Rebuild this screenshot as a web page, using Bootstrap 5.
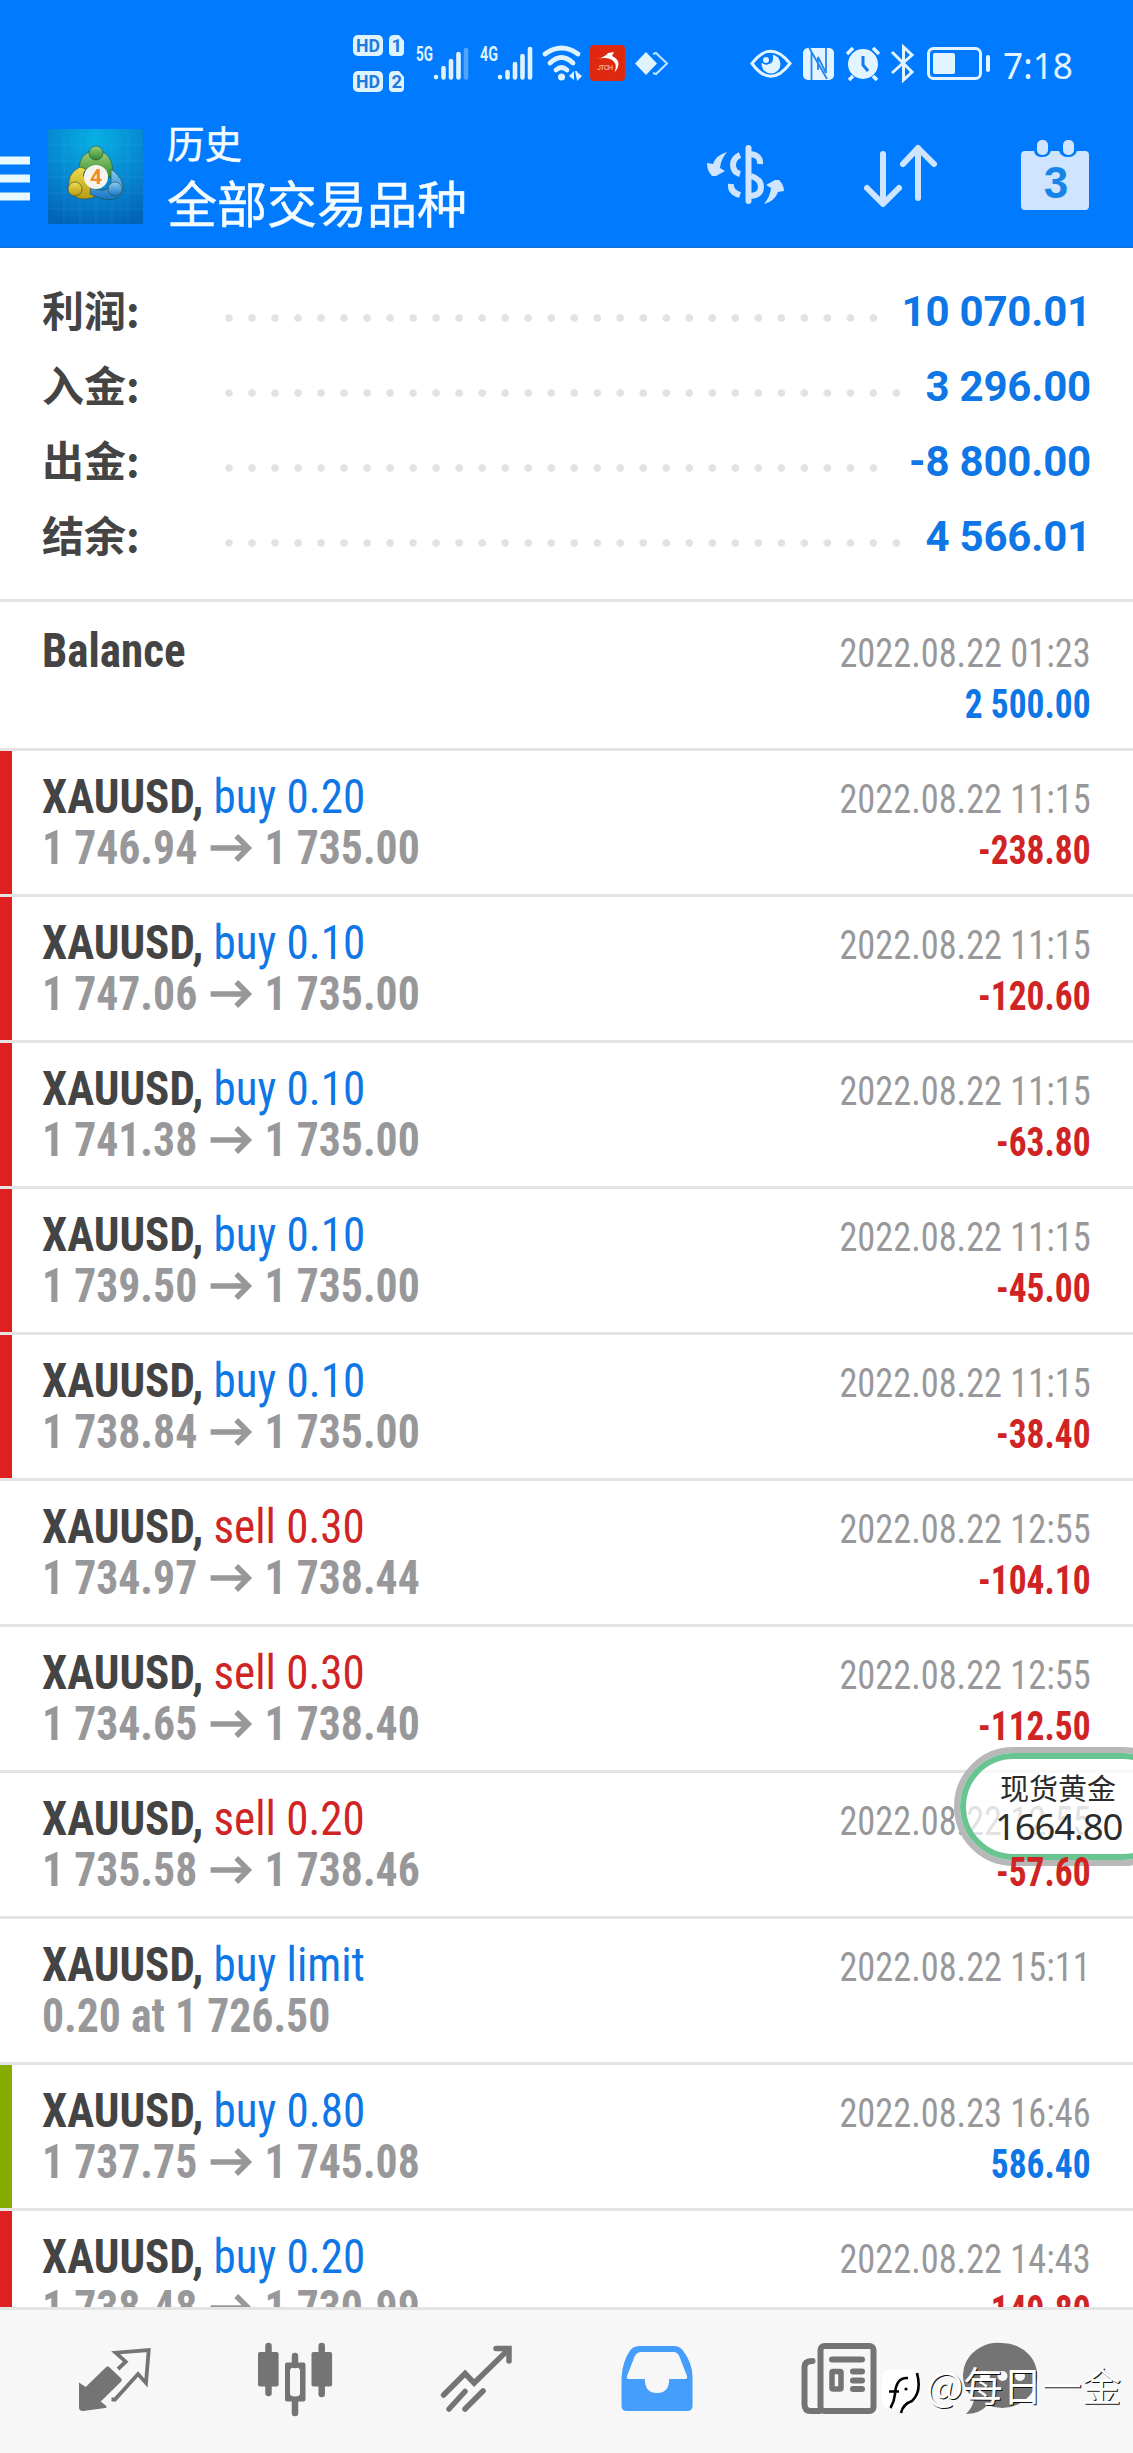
<!DOCTYPE html>
<html lang="zh-CN">
<head>
<meta charset="utf-8">
<meta name="viewport" content="width=device-width, initial-scale=1">
<title>历史</title>
<link href="https://cdn.jsdelivr.net/npm/bootstrap@5.3.0/dist/css/bootstrap.min.css" rel="stylesheet">
<style>
body{font-family:Roboto,"Noto Sans CJK SC",sans-serif;color:#444;background:#fff}
.screen{width:1133px;height:2453px;overflow:hidden}
.topbar{height:248px;background:#007aff;border-bottom:1px solid #1a6fce}
.status{height:120px}
.titles{margin-left:25px;line-height:1;color:#f4fcff;font-family:"Noto Sans CJK SC",sans-serif;-webkit-text-stroke:.5px #f4fcff}
.title-a{font-size:37.5px;line-height:43px;height:44px}
.title-b{font-size:50px;line-height:74px}
.summary{height:354px;padding:26px 42px 0;border-bottom:3px solid #e4e4e4}
.sumrow{height:75px}
.sumlabel{width:183px;font:700 42px/69px "Noto Sans CJK SC",sans-serif;height:75px}
.dots{height:9px;margin-top:14px;background:radial-gradient(circle at 4px 4px,#e2e2e2 3.4px,transparent 4.2px) 0 0/23.02px 9px repeat-x}
.sumval{font-weight:700;font-size:42px;letter-spacing:-.2px;color:#0f76e6;line-height:75px;white-space:pre}
.deals{height:1705px}
.deal{height:146px;border-bottom:3px solid #e4e4e4;padding:20px 42px 0}
.deal-balance{height:149px;padding-top:23px}
.loss{background:linear-gradient(#e02020,#e02020) 0 0/12px 100% no-repeat}
.gain{background:linear-gradient(#86ac00,#86ac00) 0 0/12px 100% no-repeat}
.cond{font-family:"Roboto Condensed",Roboto,sans-serif;font-stretch:75%;white-space:nowrap}
.sym,.px{transform-origin:0 50%}
.when,.amt{transform-origin:100% 50%}
.sym{font-size:48px;line-height:51px;transform:scaleX(.938)}
.px{font-size:48px;line-height:51px;font-weight:700;color:#98989a;transform:scaleX(.91)}
.px svg{margin:0 14px 6px}
.when{font-size:40px;line-height:51px;margin-top:3px;color:#98989a;transform:scaleX(.908)}
.amt{font-size:40px;line-height:51px;font-weight:700;transform:scaleX(.885)}
.up{color:#0f76e6}.down{color:#d02424}
.front{position:relative;z-index:3}
.tabs{height:146px;background:#f7f7f7;border-top:3px solid #e4e4e4}
.pill{left:954px;top:1747px;width:228px;height:119px;border:6px solid #b8b8b8;border-radius:60px;z-index:2}
.pill-in{border:6px solid #68c592;border-radius:54px;background:rgba(255,255,255,.72);height:107px;padding:13px 0 0 34px;color:#2c2c2c;font-family:"Noto Sans","Noto Sans CJK SC",sans-serif}
.pill-name{font-size:29px;line-height:34px}
.pill-price{font-size:36.5px;line-height:40px;letter-spacing:-1.1px;margin-left:-5px}
.wm{left:880px;top:2358px;z-index:4}
.wm span{margin-left:4px;font:400 39.5px/52px "Noto Sans CJK SC",sans-serif;color:#fff;text-shadow:1px 1px 0 #111}
</style>
</head>
<body>
<div class="screen position-relative">
<header class="topbar">
  <div class="status d-flex">
    <svg width="700" height="120" viewBox="0 0 700 120" fill="#dff3ff" font-family="Roboto" font-weight="700">
      <rect x="353" y="35" width="30" height="21" rx="5"/><path d="M389 40q0-5 5-5h5l5 6v11q0 4-4 4h-7q-4 0-4-4z"/>
      <rect x="353" y="71" width="30" height="21" rx="5"/><path d="M389 76q0-5 5-5h5l5 6v11q0 4-4 4h-7q-4 0-4-4z"/>
      <g fill="#1c7be0" font-size="18.500"><text x="356" y="52" textLength="24" lengthAdjust="spacingAndGlyphs">HD</text><text x="391.500" y="52">1</text><text x="356" y="88" textLength="24" lengthAdjust="spacingAndGlyphs">HD</text><text x="391.500" y="88">2</text></g>
      <g font-size="20"><text x="416" y="61" textLength="17" lengthAdjust="spacingAndGlyphs">5G</text><text x="480" y="61" textLength="18" lengthAdjust="spacingAndGlyphs">4G</text></g>
      <g stroke="#dff3ff" stroke-width="4.6" stroke-linecap="round"><path d="M436 77v.1M443.500 68v9.500M451 61v16.500M458.500 54v23.500M500 77v.1M507.500 72v5.500M515 64v13.500M522.500 56v21.500M530 49v28.500"/><path d="M466 50v27.500" opacity=".35"/></g>
      <g fill="none" stroke="#dff3ff" stroke-width="4.800" stroke-linecap="round"><path d="M545 54Q561.500 42 578 54M550 63Q561.500 52 573 63M556 70Q561.500 65 567 70"/></g>
      <circle cx="561.500" cy="77" r="3.500"/><path d="M569 76l5-5v9M575 71h2v9M577 72l5 4-5 5"/>
      <rect x="590" y="45" width="35" height="36" rx="4" fill="#de2910"/>
      <path d="M597 59q8-2 11-6l6-1-2 4q12 6 2 17 5-10-4-14-5-2-13 0" fill="#fff"/><text x="597" y="70" font-size="7" font-weight="400" fill="#ffd8c8" textLength="16">JTCH</text>
      <path d="M646 52l11 11.500-11 11.500-11-11.500z"/><path d="M653 54l3-1 11 10.500-11 10.500-3-1" fill="none" stroke="#bfe4ff" stroke-width="2"/>
    </svg>
    <svg width="433" height="120" viewBox="700 0 433 120" fill="#e2f4ff">
      <path d="M752 63.500Q770.500 39 790 63.500Q770.500 89 752 63.500Z" fill="none" stroke="#e2f4ff" stroke-width="3"/><circle cx="771" cy="64" r="9.500"/><path d="M761 62q0-9 8-9l4 2q1 8-4 9-4 2-8-2" fill="#007aff"/><circle cx="766" cy="60" r="3"/>
      <rect x="803" y="48" width="31" height="32" rx="5"/><path d="M811.500 80V52L827 79M826 48v25L818 57V70M811.500 52L809 47" stroke="#2385ee" stroke-width="1.800" fill="none"/>
      <circle cx="863" cy="64" r="15"/><path d="M847 54l6-6M879 54l-6-6M853 76l-4 4M873 76l4 4" stroke="#e2f4ff" stroke-width="3.500"/><path d="M863 56v9l5 6" stroke="#1677e8" stroke-width="3" fill="none"/>
      <path d="M892 52l20 20-8.500 8V47l8.500 8-20 18" fill="none" stroke="#e2f4ff" stroke-width="3"/>
      <rect x="928.500" y="48.500" width="52" height="30" rx="5" fill="none" stroke="#e2f4ff" stroke-width="3"/><rect x="933" y="53" width="22" height="21" rx="2"/><rect x="986" y="55" width="4" height="17" rx="2"/>
      <text x="1003" y="79" font-family="Noto Sans" font-size="37" textLength="70" lengthAdjust="spacingAndGlyphs">7:18</text>
    </svg>
  </div>
  <div class="d-flex align-items-start">
    <svg width="142" height="120" viewBox="0 120 142 120" overflow="visible">
      <defs><radialGradient id="tile" cx=".5" cy=".1" r=".95"><stop offset="0" stop-color="#06b0e4"/><stop offset=".6" stop-color="#0783cf"/><stop offset="1" stop-color="#0263b8"/></radialGradient>
      <linearGradient id="gr" x2="0" y2="1"><stop stop-color="#9dd07a"/><stop offset="1" stop-color="#2d8a2f"/></linearGradient><linearGradient id="ye" x2="0" y2="1"><stop stop-color="#f0dc4e"/><stop offset="1" stop-color="#b59a12"/></linearGradient><linearGradient id="bl" x2="0" y2="1"><stop stop-color="#8accf2"/><stop offset="1" stop-color="#1676c4"/></linearGradient></defs>
      <path fill="#e8faff" d="M0 156.500h30v8H0zM0 174.500h30v8H0zM0 192.500h30v8H0z"/>
      <rect x="48" y="129" width="95" height="95" fill="url(#tile)"/>
      <path d="M64 129v95M80 129v95M96 129v95M112 129v95M128 129v95M48 145h95M48 161h95M48 177h95M48 193h95M48 209h95" stroke="#5ad0f5" stroke-opacity=".13"/>
      <g stroke="#214d42" stroke-opacity=".6"><path d="M79 170Q79 151 96 151T113 175Q104 183 88 174L79 170z" fill="url(#gr)"/><path d="M80 167Q65 174 70 192Q78 203 95 197L88 181Q80 176 86 169z" fill="url(#ye)"/><path d="M111 169Q125 179 123 192Q114 206 90 194L91 187Q103 194 111 186z" fill="url(#bl)"/><circle cx="96" cy="153" r="7" fill="url(#gr)"/><circle cx="75" cy="189" r="7" fill="url(#ye)"/><circle cx="115" cy="189" r="7" fill="url(#bl)"/></g>
      <circle cx="96" cy="177" r="12" fill="#f5f3ee"/><text x="96" y="184" text-anchor="middle" font-family="Roboto" font-weight="700" font-size="21" fill="#f08a28">4</text>
    </svg>
    <div class="titles"><div class="title-a">历史</div><div class="title-b">全部交易品种</div></div>
    <svg class="ms-auto" width="453" height="120" viewBox="680 120 453 120" fill="#cfe5ff">
      <path d="M727 152q-11 3-14 12l-6-1q0 8 5 13h4l9-5-5-3q1-9 7-16z"/><path d="M764 204q11-3 14-12l6-1q0-6-5-11h-4l-9 5 5 3q-1 9-7 16z"/>
      <g fill="none" stroke="#cfe5ff" stroke-width="6"><path d="M748.500 148v53" stroke-linecap="round"/><path d="M740 155q-7 3-7 10t7 9M750 154q11 1 10 10M740 195q-10-3-9-11M751 176q10 3 10 11t-10 9"/></g>
      <g fill="none" stroke="#cfe5ff" stroke-width="6" stroke-linecap="round" stroke-linejoin="round"><path d="M883 154v49M867 188l16 16 16-16M918 198v-50M903 164l15-16 16 16"/></g>
      <path d="M1025 151h9q1 6 8 6t9-6h8q2 6 9 6t9-6h8q4 0 4 4v51q0 4-4 4h-60q-4 0-4-4v-51q0-4 4-4z"/><rect x="1037" y="140" width="11" height="15" rx="5"/><rect x="1063" y="140" width="11" height="15" rx="5"/>
      <text x="1056" y="198" text-anchor="middle" font-family="Liberation Sans" font-weight="700" font-size="44" fill="#1784e8">3</text>
    </svg>
  </div>
</header>
<section class="summary">
  <div class="sumrow d-flex align-items-center"><div class="sumlabel">利润:</div><div class="dots" style="width:653px"></div><div class="sumval ms-auto">10 070.01</div></div>
  <div class="sumrow d-flex align-items-center"><div class="sumlabel">入金:</div><div class="dots" style="width:676px"></div><div class="sumval ms-auto">3 296.00</div></div>
  <div class="sumrow d-flex align-items-center"><div class="sumlabel">出金:</div><div class="dots" style="width:653px"></div><div class="sumval ms-auto">-8 800.00</div></div>
  <div class="sumrow d-flex align-items-center"><div class="sumlabel">结余:</div><div class="dots" style="width:676px"></div><div class="sumval ms-auto">4 566.01</div></div>
</section>
<main class="deals overflow-hidden cond" id="deals">
  <div class="deal deal-balance d-flex justify-content-between"><div class="sym fw-bold">Balance</div><div class="text-end"><div class="when">2022.08.22 01:23</div><div class="amt up">2 500.00</div></div></div>
</main>
<nav class="tabs">
  <svg width="1133" height="143" viewBox="0 2310 1133 143" fill="#747474">
    <path d="M79 2382.500l6.700 4.500 20-19.500q2-2 4 0l11 10.500q2 2 0 4l-20 19.500 5 4q2 2-.5 2.500l-22 3q-4 0-4.200-3z"/>
    <path d="M118 2369l7.700-7.300-10-9 33-2.700-2.700 33-8-9-23 25.500-3.500 0" fill="none" stroke="#747474" stroke-width="3.800"/>
    <rect x="258" y="2352" width="20.600" height="34.500" rx="2"/><rect x="311.500" y="2352" width="20.600" height="34.500" rx="2"/><path d="M268.500 2346v47M321.700 2346v48M295 2356v9M295 2402v11" stroke="#747474" stroke-width="6.500" stroke-linecap="round"/><path fill-rule="evenodd" d="M287 2362.500h16.500q2 0 2 2v35q0 2-2 2H287q-2 0-2-2v-35q0-2 2-2zm3 8v23q0 3 5 3t5-3v-23q0-3-5-3t-5 3z"/>
    <path d="M443.600 2395l21.500-21.500 9 9.500L509 2349M496 2348.500h13v12.500M449 2409l16-17.500M465 2409l18-18" fill="none" stroke="#747474" stroke-width="5.500" stroke-linecap="round"/>
    <path transform="translate(621.500 0) scale(1.11 1) translate(-617 0)" fill="#459dfc" fill-rule="evenodd" d="M634 2346h30q5 0 8 4 9 13 9 27v29q0 5-5 5h-54q-5 0-5-5v-29q1-16 8-27 3-4 9-4zm1 6q-4 0-6 4l-7 20q-1 3 2 3h14q0 14 11 14t11-14h14q3 0 2-3l-7-20q-2-4-5-4z"/>
    <g fill="none" stroke="#747474" stroke-width="6" stroke-linecap="round"><rect x="820.500" y="2346" width="53" height="65" rx="4"/><path d="M812.500 2361q-8 0-8 6v37q0 7 6 7h9M832 2359.500h30M853 2371.500h9M853 2380.500h9M853 2389h9"/><rect x="832" y="2371.500" width="9" height="17.500" rx="1" stroke-width="5.500"/></g>
    <path d="M1001.500 2343a35 32.500 0 1 1-14 62q-8 9-21.500 9 7-7 8-15a35 32.500 0 0 1 27.500-56z"/><g fill="#f7f7f7"><circle cx="985" cy="2376" r="5"/><circle cx="1002.500" cy="2376" r="5"/><circle cx="1020" cy="2376" r="5"/></g>
  </svg>
</nav>
<div class="pill position-absolute"><div class="pill-in"><div class="pill-name">现货黄金</div><div class="pill-price text-nowrap">1664.80</div></div></div>
<div class="wm position-absolute d-flex">
  <svg width="42" height="60" viewBox="880 2358 42 60"><path d="M890 2370h20q9 0 9 9v14q0 10-9 14-6 2-9 6l-2-5h-9q-8 0-8-9v-20q0-9 8-9z" fill="#fff"/><path d="M890.500 2408q4-7 4.500-14 1-17 13-16M889 2391.500h10M917 2373q5 19-5 28-9 3-11 12" fill="none" stroke="#000" stroke-width="2.600"/><circle cx="906" cy="2389" r="1.600"/></svg>
  <span>@每日一金</span>
</div>
</div>
<script>
const arrow='<svg width="46" height="28" viewBox="0 0 42 28" preserveAspectRatio="none" fill="none" stroke="#98989a" stroke-width="5.500"><path d="M0 14h38M26 2l12 12-12 12"/></svg>';
const rows=[
['loss','buy','0.20','1 746.94','1 735.00','22 11:15','-238.80'],
['loss','buy','0.10','1 747.06','1 735.00','22 11:15','-120.60'],
['loss','buy','0.10','1 741.38','1 735.00','22 11:15','-63.80'],
['loss','buy','0.10','1 739.50','1 735.00','22 11:15','-45.00'],
['loss','buy','0.10','1 738.84','1 735.00','22 11:15','-38.40'],
['','sell','0.30','1 734.97','1 738.44','22 12:55','-104.10'],
['','sell','0.30','1 734.65','1 738.40','22 12:55','-112.50'],
['','sell','0.20','1 735.58','1 738.46','22 12:55','-57.60'],
['','buy','limit','0.20 at 1 726.50','','22 15:11',''],
['gain','buy','0.80','1 737.75','1 745.08','23 16:46','586.40'],
['loss','buy','0.20','1 738.48','1 730.99','22 14:43','-149.80']];
document.getElementById('deals').insertAdjacentHTML('beforeend',rows.map(([bar,side,vol,from,to,when,amt])=>
`<div class="deal ${bar} d-flex justify-content-between"><div><div class="sym"><b>XAUUSD,</b> <span class="${side==='buy'?'up':'down'}">${side} ${vol}</span></div><div class="px">${from}${to?arrow+to:''}</div></div><div class="text-end"><div class="when">2022.08.${when}</div><div class="amt ${amt[0]==='-'?'down':'up'} ${amt==='-57.60'?'front':''}">${amt}</div></div></div>`).join(''));
</script>
<script src="https://cdn.jsdelivr.net/npm/bootstrap@5.3.0/dist/js/bootstrap.bundle.min.js"></script>
</body>
</html>
